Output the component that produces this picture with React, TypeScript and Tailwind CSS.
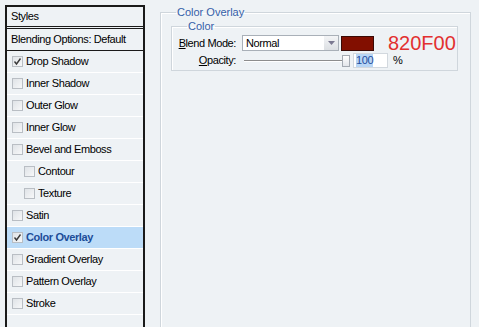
import React from "react";

type Item = { label: string; checked?: boolean; indent?: boolean; selected?: boolean };

const items: Item[] = [
  { label: "Drop Shadow", checked: true },
  { label: "Inner Shadow" },
  { label: "Outer Glow" },
  { label: "Inner Glow" },
  { label: "Bevel and Emboss" },
  { label: "Contour", indent: true },
  { label: "Texture", indent: true },
  { label: "Satin" },
  { label: "Color Overlay", checked: true, selected: true },
  { label: "Gradient Overlay" },
  { label: "Pattern Overlay" },
  { label: "Stroke" },
];

function Box({ checked }: { checked?: boolean }) {
  return (
    <span className="w-[11px] h-[11px] border border-[#b9bec4] bg-gradient-to-br from-[#dfe3e7] to-[#f7f8f9] flex items-center justify-center shrink-0">
      {checked && (
        <svg width="9" height="9" viewBox="0 0 9 9">
          <path d="M1.5 4.5 L3.5 7 L7.5 1.5" fill="none" stroke="#3a3a3a" strokeWidth="1.4" />
        </svg>
      )}
    </span>
  );
}

export default function App() {
  return (
    <div
      className="w-[479px] h-[327px] overflow-hidden bg-[#eef2f5] flex text-[11px] text-black whitespace-nowrap tracking-[-0.4px]"
      style={{ fontFamily: "'Liberation Sans', Arial, sans-serif" }}
    >
      {/* styles list */}
      <div className="ml-[5px] mt-[5px] w-[140px] h-[340px] border-2 border-[#1a1a1a] bg-[#eef2f5] flex flex-col shrink-0">
        <div className="h-[20px] flex items-center pl-[4px] border-b border-[#1a1a1a]">Styles</div>
        <div className="h-[1px]" />
        <div className="h-[23px] flex items-center pl-[4px] border-y border-[#1a1a1a]">
          Blending Options: Default
        </div>
        {items.map((it) => (
          <div
            key={it.label}
            className={`h-[22px] flex items-center gap-[3px] border-b border-white ${
              it.indent ? "pl-[17px]" : "pl-[5px]"
            } ${it.selected ? "bg-[#bcdcf8] text-[#1d4d99] font-bold" : ""}`}
          >
            <Box checked={it.checked} />
            <span>{it.label}</span>
          </div>
        ))}
      </div>

      {/* settings */}
      <div className="flex-1 pl-[15px] pt-[5px]">
        <fieldset className="w-[311px] h-[340px] border border-[#cfd6dc] shadow-[inset_1px_1px_0_#ffffff] px-[10px]">
          <legend className="ml-[5px] px-[1px] text-[#3560a8] text-[11px] leading-[14px] tracking-normal">Color Overlay</legend>
          <fieldset className="w-[287px] h-[52px] border border-[#cfd6dc] shadow-[inset_1px_1px_0_#ffffff]">
            <legend className="ml-[15px] px-[1px] text-[#3560a8] text-[11px] leading-[14px] tracking-normal">Color</legend>
            <div className="mt-[2px] flex items-center h-[16px]">
              <span className="w-[64px] text-right">
                <span className="underline">B</span>lend Mode:
              </span>
              <div className="ml-[6px] w-[97px] h-[16px] border border-[#a9b0b8] bg-white flex items-center justify-between pl-[3px]">
                <span>Normal</span>
                <span className="w-[14px] h-[14px] bg-gradient-to-b from-[#f3f4f6] to-[#dcdfe3] flex items-center justify-center">
                  <svg width="7" height="4" viewBox="0 0 7 4">
                    <path d="M0 0 L7 0 L3.5 4 Z" fill="#7a7890" />
                  </svg>
                </span>
              </div>
              <div className="ml-[2px] w-[33px] h-[15px] bg-[#820F00] border border-[#3a0a05]" />
              <span className="ml-[14px] text-[20px] leading-[16px] text-[#e2302f] tracking-normal">820F00</span>
            </div>
            <div className="mt-[2px] flex items-center h-[15px]">
              <span className="w-[64px] text-right">
                <span className="underline">O</span>pacity:
              </span>
              <div className="ml-[8px] w-[98px] h-[2px] bg-[#8d8d8d] border-b border-white" />
              <div className="w-[8px] h-[12px] border border-[#a4aab2] bg-gradient-to-b from-white to-[#e3e6ea]" />
              <div className="ml-[3px] w-[35px] h-[15px] bg-white border border-[#d2d8de] flex items-center pl-[2px]">
                <span className="bg-[#b8d6f5] text-[#1f4d9e] leading-[13px]">100</span>
              </div>
              <span className="ml-[5px]">%</span>
            </div>
          </fieldset>
        </fieldset>
      </div>
    </div>
  );
}
